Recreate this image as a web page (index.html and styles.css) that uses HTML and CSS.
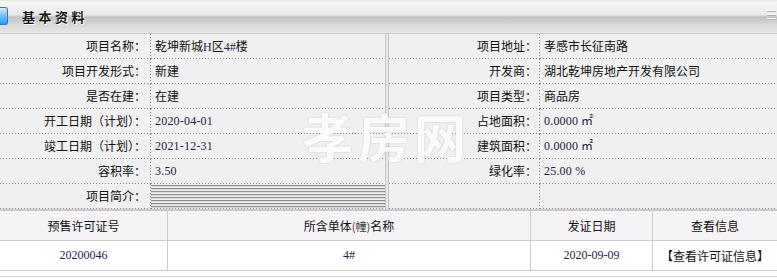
FILE: index.html
```html
<!DOCTYPE html>
<html lang="zh-CN">
<head>
<meta charset="utf-8">
<title>基本资料</title>
<link rel="stylesheet" href="styles.css">
</head>
<body>
<div class="panel">
  <div class="hd">
    <span class="hd-icon"></span>
    <span class="hd-title">基本资料</span>
    <svg class="hd-menu" width="9" height="13" viewBox="0 0 9 13">
      <rect x="0" y="1" width="9" height="1" fill="#fafafa"/>
      <rect x="0" y="2" width="9" height="1" fill="#b0b0b0"/>
      <rect x="0" y="5" width="9" height="1" fill="#fafafa"/>
      <rect x="0" y="6" width="9" height="1" fill="#b0b0b0"/>
      <rect x="0" y="9" width="9" height="1" fill="#fafafa"/>
      <rect x="0" y="10" width="9" height="1" fill="#b0b0b0"/>
    </svg>
  </div>

  <div class="info">
    <div class="half left">
      <div class="lbl">项目名称：</div><div class="val">乾坤新城<span class="num">H</span>区<span class="num">4#</span>楼</div>
      <div class="lbl">项目开发形式：</div><div class="val">新建</div>
      <div class="lbl">是否在建：</div><div class="val">在建</div>
      <div class="lbl">开工日期（计划）：</div><div class="val num">2020-04-01</div>
      <div class="lbl">竣工日期（计划）：</div><div class="val num">2021-12-31</div>
      <div class="lbl">容积率：</div><div class="val num">3.50</div>
      <div class="lbl">项目简介：</div><div class="val stripes"></div>
    </div>
    <div class="sep"></div>
    <div class="half right">
      <div class="lbl">项目地址：</div><div class="val">孝感市长征南路</div>
      <div class="lbl">开发商：</div><div class="val">湖北乾坤房地产开发有限公司</div>
      <div class="lbl">项目类型：</div><div class="val">商品房</div>
      <div class="lbl">占地面积：</div><div class="val num">0.0000 ㎡</div>
      <div class="lbl">建筑面积：</div><div class="val num">0.0000 ㎡</div>
      <div class="lbl">绿化率：</div><div class="val num">25.00 %</div>
      <div class="lbl"></div><div class="val"></div>
    </div>
  </div>

  <div class="permits">
    <div class="th">预售许可证号</div>
    <div class="th">所含单体<span class="paren">(幢)</span>名称</div>
    <div class="th">发证日期</div>
    <div class="th">查看信息</div>
    <div class="td num">20200046</div>
    <div class="td num">4#</div>
    <div class="td num">2020-09-09</div>
    <div class="td">【查看许可证信息】</div>
  </div>
  <div class="foot"></div>

  <div class="wm">孝房网</div>
</div>
</body>
</html>
```

FILE: styles.css
```css
html, body {
  margin: 0;
  padding: 0;
  background: #ffffff;
}

.panel {
  position: relative;
  width: 777px;
  font-family: "Noto Sans CJK SC", "Liberation Sans", sans-serif;
  font-size: 12px;
  color: #111;
}

/* header bar */
.hd {
  height: 33px;
  border-bottom: 1px solid #c8c8c8;
  background: linear-gradient(#dcdcdc 0, #f6f6f6 1px, #ececec 13px, #e4e4e4 15px, #c2c2c2 17px, #d6d6d6 24px, #e6e6e6 33px);
  display: flex;
  align-items: center;
}

.hd-icon {
  width: 8px;
  height: 18px;
  margin-top: -1px;
  box-sizing: border-box;
  border: 1px solid #3a78b8;
  border-left: none;
  border-radius: 0 3px 3px 0;
  background: linear-gradient(#d8f0ff, #74c4f8 45%, #2c9cf0);
}

.hd-title {
  margin-left: 14px;
  font-size: 13px;
  font-weight: bold;
  letter-spacing: 3.5px;
  color: #1a1a1a;
  text-shadow: 1px 1px 0 #ffffff;
  margin-top: -1px;
}

.hd-menu {
  margin-left: auto;
  margin-right: 1px;
  margin-top: -2px;
}

/* info grid */
.info {
  display: flex;
  background: #f0f0f0;
}

.half {
  display: grid;
  grid-auto-rows: 25px;
}

.half.left {
  grid-template-columns: 151px 234px;
}

.half.right {
  grid-template-columns: 151px 237px;
}

.sep {
  width: 2px;
  border-left: 1px solid #c6c6c6;
  border-right: 1px solid #c6c6c6;
  background: #e6e6e6;
}

.lbl, .val {
  line-height: 24px;
  white-space: nowrap;
  overflow: hidden;
  background-image: linear-gradient(to right, #8a8a8a 1px, transparent 1px);
  background-size: 3px 1px;
  background-repeat: repeat-x;
  background-position: left bottom;
}

.lbl {
  text-align: right;
  padding-right: 5px;
  background-image:
    linear-gradient(to right, #8a8a8a 1px, transparent 1px),
    linear-gradient(to bottom, #8a8a8a 1px, transparent 1px);
  background-size: 3px 1px, 1px 3px;
  background-repeat: repeat-x, repeat-y;
  background-position: left bottom, right top;
}

.val {
  padding-left: 4px;
}

.right .lbl {
  padding-right: 3px;
}

.right .val {
  padding-left: 4px;
}

.num {
  font-family: "Liberation Serif", "DejaVu Serif", serif;
  font-size: 12px;
  color: #1c2448;
}

.val.num {
  letter-spacing: 0.2px;
}

.val.stripes {
  background-image:
    linear-gradient(to right, #8a8a8a 1px, transparent 1px),
    repeating-linear-gradient(to bottom, #8e8e8e 0 1px, #dadada 1px 2px, #f0f0f0 2px 3px);
  background-size: 3px 1px, 100% 23px;
  background-repeat: repeat-x, no-repeat;
  background-position: left bottom, left 1px;
}

/* permit table */
.permits {
  display: grid;
  grid-template-columns: 167px 362px 121px 1fr;
  grid-template-rows: 29px 29px;
  gap: 1px;
  background: #cccccc;
  border-top: 2px solid #c8c8c8;
  border-bottom: 1px solid #cccccc;
}

.th, .td {
  display: flex;
  align-items: center;
  justify-content: center;
  white-space: nowrap;
}

.th {
  background: #f6f3f6;
  font-size: 12px;
  color: #111;
}

.td {
  background: #ffffff;
}

.td.num {
  font-size: 12px;
}

.paren {
  font-size: 11px;
  color: #333;
}

.foot {
  height: 5px;
  background: #ffffff;
  border-bottom: 1px solid #d4d4d4;
}

/* watermark overlay */
.wm {
  position: absolute;
  left: 302px;
  top: 108px;
  font-size: 52px;
  font-weight: bold;
  line-height: 56px;
  letter-spacing: 4px;
  color: rgba(255, 255, 255, 0.92);
  text-shadow: 0 0 2px rgba(0, 0, 0, 0.18);
  pointer-events: none;
}
```
